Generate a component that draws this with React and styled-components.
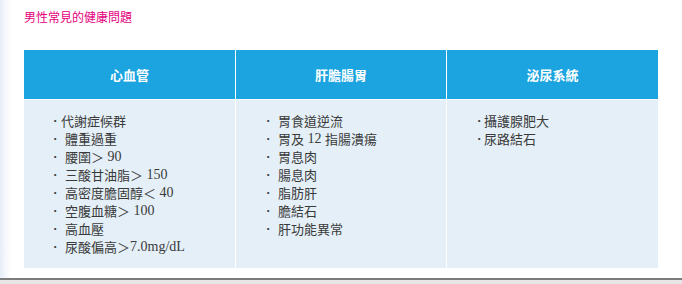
import React from "react";
import styled, { createGlobalStyle } from "styled-components";

const GlobalStyle = createGlobalStyle`
  html, body {
    margin: 0;
    padding: 0;
    background: #ffffff;
  }
`;

const Page = styled.div`
  display: flex;
  flex-direction: column;
  width: 682px;
  height: 284px;
  overflow: hidden;
`;

const Content = styled.div`
  height: 280px;
  box-sizing: border-box;
  padding: 10px 0 0 24px;
  background: linear-gradient(to right, #e6edf7 0px, #f4f7fc 5px, #ffffff 11px);
`;

const Title = styled.h3`
  margin: 0;
  height: 14px;
  font-family: "Noto Sans CJK TC", "Noto Sans", sans-serif;
  font-size: 12px;
  font-weight: normal;
  line-height: 14px;
  color: #e6007e;
`;

const Table = styled.div`
  display: grid;
  grid-template-columns: 211px 210px 211px;
  grid-template-rows: 49px 168px;
  gap: 1px;
  width: 634px;
  margin-top: 26px;
  background: #ffffff;
`;

const HeadCell = styled.div`
  display: flex;
  align-items: center;
  justify-content: center;
  background: #1ba4df;
  color: #ffffff;
  font-family: "Noto Sans CJK TC", "Noto Sans", sans-serif;
  font-size: 13px;
  font-weight: bold;
`;

const BodyCell = styled.ul`
  margin: 0;
  padding: 12px 0 0 ${(p) => p.$indent}px;
  list-style: none;
  background: #e4eff7;
`;

const Item = styled.li`
  display: flex;
  height: 18px;
  line-height: 18px;
  font-family: "Noto Sans CJK TC", "Noto Sans", sans-serif;
  font-size: 13px;
  color: #3a3a3a;
  white-space: nowrap;
`;

const Num = styled.span`
  font-family: "Liberation Serif", serif;
  font-size: 14px;
  white-space: pre;
`;

const Bullet = styled.span`
  display: inline-block;
  width: ${(p) => p.$width}px;
  flex: none;
  font-family: "Liberation Serif", serif;
  font-weight: bold;
`;

const Footer = styled.div`
  height: 4px;
  border-top: 2px solid #7c7c7c;
  background: #e6e6e6;
`;

// each item: [cjk text, latin part, bullet width, cjk tail]
const columns = [
  {
    title: "心血管",
    indent: 29,
    items: [
      ["代謝症候群", "", 8],
      ["體重過重", "", 12],
      ["腰圍＞", " 90", 12],
      ["三酸甘油脂＞", " 150", 12],
      ["高密度膽固醇＜", " 40", 12],
      ["空腹血糖＞", " 100", 12],
      ["高血壓", "", 12],
      ["尿酸偏高＞", "7.0mg/dL", 12],
    ],
  },
  {
    title: "肝膽腸胃",
    indent: 30,
    items: [
      ["胃食道逆流", "", 12],
      ["胃及", " 12 ", 12, "指腸潰瘍"],
      ["胃息肉", "", 12],
      ["腸息肉", "", 12],
      ["脂肪肝", "", 12],
      ["膽結石", "", 12],
      ["肝功能異常", "", 12],
    ],
  },
  {
    title: "泌尿系統",
    indent: 30,
    items: [
      ["攝護腺肥大", "", 7],
      ["尿路結石", "", 7],
    ],
  },
];

export default function App() {
  return (
    <>
      <GlobalStyle />
      <Page>
        <Content>
          <Title>男性常見的健康問題</Title>
          <Table>
            {columns.map((c) => (
              <HeadCell key={c.title}>{c.title}</HeadCell>
            ))}
            {columns.map((c) => (
              <BodyCell key={c.title} $indent={c.indent}>
                {c.items.map(([text, latin, w, rest]) => (
                  <Item key={text}>
                    <Bullet $width={w}>·</Bullet>
                    {text}
                    {latin && <Num>{latin}</Num>}
                    {rest}
                  </Item>
                ))}
              </BodyCell>
            ))}
          </Table>
        </Content>
        <Footer />
      </Page>
    </>
  );
}
